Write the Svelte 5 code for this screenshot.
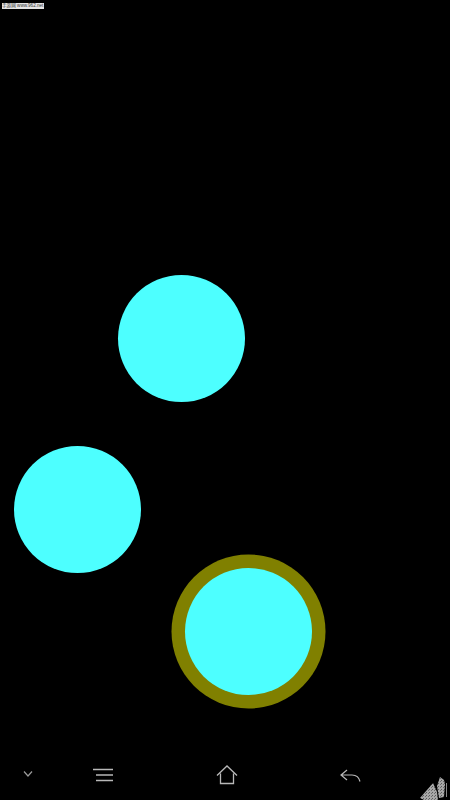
<script lang="ts">
  // 触摸点：坐标就是内容本身
  const touches = [
    { x: 181, y: 338, active: false },
    { x: 77, y: 509, active: false },
    { x: 248, y: 631, active: true },
  ];
</script>

<div class="screen">
  <div class="stage">
    <div class="mark">手游网 www.962.net</div>
    {#each touches as t}
      <div class="dot" class:active={t.active} style="left: {t.x}px; top: {t.y}px"></div>
    {/each}
  </div>

  <nav class="nav">
    <svg class="chev" width="10" height="8" viewBox="0 0 10 8">
      <path d="M1 1.5 5 6 9 1.5" fill="none" stroke="#9a9a9a" stroke-width="1.2" />
    </svg>
    <svg class="menu" width="22" height="14" viewBox="0 0 22 14">
      <path d="M1 1.5H21M4 7H21M4 12.5H21" fill="none" stroke="#b8b8b8" stroke-width="1.3" />
    </svg>
    <svg class="home" width="22" height="20" viewBox="0 0 22 20">
      <path d="M1 10.5 11 1 21 10.5M4.5 8.5V18.5H17.5V8.5" fill="none" stroke="#b8b8b8" stroke-width="1.3" />
    </svg>
    <svg class="back" width="21" height="14" viewBox="0 0 21 14">
      <path d="M7 1 1 6 7 11M1 6H12C16 6 19 8 20 12.5" fill="none" stroke="#b8b8b8" stroke-width="1.2" />
    </svg>
    <svg class="logo" width="30" height="26" viewBox="0 0 30 26">
      <defs>
        <pattern id="speck" width="3" height="3" patternUnits="userSpaceOnUse">
          <rect width="3" height="3" fill="#a8a8a8" />
          <rect width="1" height="1" fill="#5c5c5c" />
          <rect x="2" y="1" width="1" height="1" fill="#6e6e6e" />
        </pattern>
      </defs>
      <path d="M0 24 13 9 17 18 18 26H4Z" fill="url(#speck)" />
      <path d="M17 12 20 3 24 6 25 10 24 23 19 24Z" fill="url(#speck)" />
      <path d="M26.5 9V23" stroke="#8a8a8a" stroke-width="1" />
    </svg>
  </nav>
</div>

<style>
  :global(body) { background: #000; }
  .screen {
    width: 450px;
    height: 800px;
    display: flex;
    flex-direction: column;
    background: #000;
    overflow: hidden;
  }
  .stage { position: relative; flex: 1; }
  .mark {
    position: absolute;
    left: 2px;
    top: 3px;
    width: 42px;
    height: 6px;
    background: #e4e4e4;
    color: #333;
    font: 4.6px/6px "Liberation Sans", "Noto Sans CJK SC", sans-serif;
    white-space: nowrap;
  }
  .dot {
    position: absolute;
    width: 127px;
    height: 127px;
    margin: -63.5px 0 0 -63.5px;
    border-radius: 50%;
    background: #4dffff;
  }
  .dot.active { box-shadow: 0 0 0 13.5px #808000; }
  .nav { position: relative; height: 50px; flex: none; }
  .nav svg { position: absolute; }
  .chev { left: 23px; top: 20px; }
  .menu { left: 92px; top: 18px; }
  .home { left: 216px; top: 15px; }
  .back { left: 340px; top: 19px; }
  .logo { left: 420px; top: 24px; }
</style>
